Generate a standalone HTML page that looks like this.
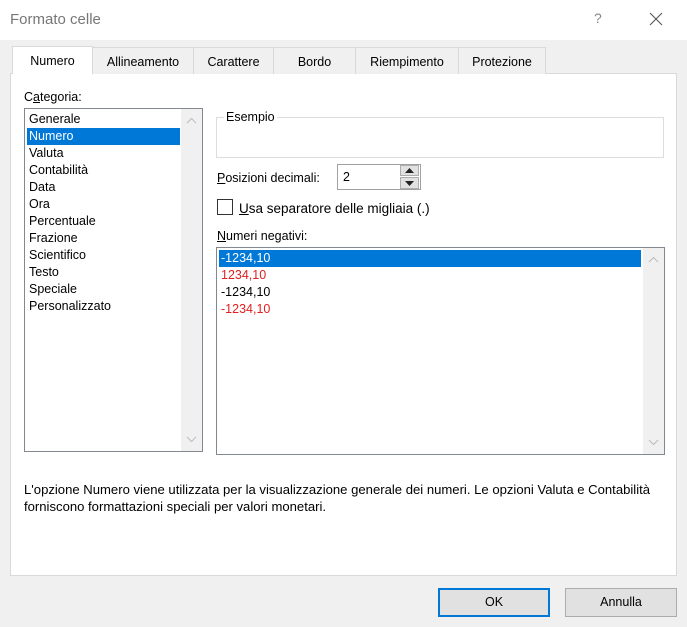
<!DOCTYPE html>
<html><head><meta charset="utf-8"><style>
*{margin:0;padding:0;box-sizing:border-box}
body{width:687px;height:627px;background:#f0f0f0;font-family:"Liberation Sans",sans-serif;font-size:12.5px;color:#000;position:relative;overflow:hidden}
.a{position:absolute;white-space:nowrap}
.title{left:0;top:0;width:687px;height:40px;background:#fff}
.panel{left:10px;top:73px;width:667px;height:503px;background:#fff;border:1px solid #d9d9d9}
.tab{top:47px;height:27px;border:1px solid #d9d9d9;border-bottom:none;background:#f0f0f0;text-align:center;line-height:28px;font-size:12.5px}
.box{background:#fff;border:1px solid #828790}
.row{position:absolute;left:2px;height:17px;line-height:17px;padding-left:2px;font-size:12.5px}
.sel{background:#0078d7;color:#fff}
.red{color:#e02020}
.sb{position:absolute;right:0;top:0;bottom:0;width:21px;background:#f0f0f0}
.btn{top:588px;height:29px;border:1px solid #adadad;background:#e1e1e1;text-align:center;line-height:27px}
</style></head><body>
<div class="a title"></div>
<div class="a" style="left:10px;top:11px;font-size:15px;color:#777">Formato celle</div>
<div class="a" style="left:594px;top:10px;font-size:14px;color:#888">?</div>
<svg class="a" style="left:649px;top:12px" width="14" height="14"><path d="M1 1L13 13M13 1L1 13" stroke="#555" stroke-width="1.1"/></svg>
<div class="a panel"></div>
<div class="a tab" style="left:92px;width:102px">Allineamento</div>
<div class="a tab" style="left:193px;width:81px">Carattere</div>
<div class="a tab" style="left:273px;width:83px">Bordo</div>
<div class="a tab" style="left:355px;width:104px">Riempimento</div>
<div class="a tab" style="left:458px;width:88px">Protezione</div>
<div class="a tab" style="left:12px;top:46px;width:81px;height:28px;background:#fff;z-index:2">Numero</div>
<div class="a" style="left:24px;top:90px">C<u>a</u>tegoria:</div>
<div class="a box" style="left:24px;top:108px;width:179px;height:344px">
<div class="sb"><svg style="position:absolute;left:5px;top:8px" width="11" height="7"><path d="M1 6L5.5 1.5L10 6" stroke="#bbb" fill="none"/></svg><svg style="position:absolute;left:5px;bottom:8px" width="11" height="7"><path d="M1 1L5.5 5.5L10 1" stroke="#bbb" fill="none"/></svg></div>
<div class="row" style="top:2px">Generale</div>
<div class="row sel" style="top:19px;width:153px">Numero</div>
<div class="row" style="top:36px">Valuta</div>
<div class="row" style="top:53px">Contabilità</div>
<div class="row" style="top:70px">Data</div>
<div class="row" style="top:87px">Ora</div>
<div class="row" style="top:104px">Percentuale</div>
<div class="row" style="top:121px">Frazione</div>
<div class="row" style="top:138px">Scientifico</div>
<div class="row" style="top:155px">Testo</div>
<div class="row" style="top:172px">Speciale</div>
<div class="row" style="top:189px">Personalizzato</div>
</div>
<div class="a" style="left:216px;top:117px;width:448px;height:41px;border:1px solid #dcdcdc"></div>
<div class="a" style="left:224px;top:110px;background:#fff;padding:0 2px">Esempio</div>
<div class="a" style="left:217px;top:171px"><u>P</u>osizioni decimali:</div>
<div class="a" style="left:337px;top:164px;width:84px;height:26px;border:1px solid #a0a0a0;background:#fff;padding:5px 5px">2</div>
<div class="a" style="left:400px;top:165px;width:19px;height:11px;background:#e1e1e1;border:1px solid #adadad"><svg style="position:absolute;left:4px;top:2px" width="9" height="5"><path d="M0 5L4.5 0L9 5Z" fill="#222"/></svg></div>
<div class="a" style="left:400px;top:177px;width:19px;height:12px;background:#e1e1e1;border:1px solid #adadad"><svg style="position:absolute;left:4px;top:3px" width="9" height="5"><path d="M0 0L4.5 5L9 0Z" fill="#222"/></svg></div>
<div class="a" style="left:217px;top:199px;width:16px;height:16px;border:1px solid #333;background:#fff"></div>
<div class="a" style="left:239px;top:201px;font-size:13.5px"><u>U</u>sa separatore delle migliaia (.)</div>
<div class="a" style="left:217px;top:229px"><u>N</u>umeri negativi:</div>
<div class="a box" style="left:216px;top:247px;width:449px;height:208px">
<div class="sb"><svg style="position:absolute;left:5px;top:8px" width="11" height="7"><path d="M1 6L5.5 1.5L10 6" stroke="#bbb" fill="none"/></svg><svg style="position:absolute;left:5px;bottom:8px" width="11" height="7"><path d="M1 1L5.5 5.5L10 1" stroke="#bbb" fill="none"/></svg></div>
<div class="row sel" style="top:2px;width:422px">-1234,10</div>
<div class="row red" style="top:19px">1234,10</div>
<div class="row" style="top:36px">-1234,10</div>
<div class="row red" style="top:53px">-1234,10</div>
</div>
<div class="a" style="left:24px;top:481px;line-height:17px;font-size:13.1px">L'opzione Numero viene utilizzata per la visualizzazione generale dei numeri. Le opzioni Valuta e Contabilità<br>forniscono formattazioni speciali per valori monetari.</div>
<div class="a btn" style="left:438px;width:112px;border:2px solid #0078d7;line-height:25px">OK</div>
<div class="a btn" style="left:565px;width:112px">Annulla</div>
</body></html>
